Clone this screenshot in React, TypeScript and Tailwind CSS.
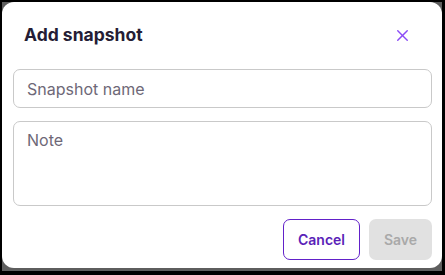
import { X } from 'lucide-react';

export default function App() {
  return (
    <div className="h-[275px] w-[445px] bg-black pt-[2px] pl-[2px] pr-[3px] pb-[4px]" style={{ fontFamily: 'Inter, "Noto Sans", sans-serif' }}>
      <div className="h-full bg-[#5e5e5e] pb-[3px]">
        <div className="flex h-full flex-col rounded-[12px] bg-white pl-[11px] pr-[10px] pb-[8px]">
          {/* Header */}
          <div className="flex items-center justify-between pt-[21px] pb-[22px] pl-[11px] pr-[20px]">
            <h2 className="text-[17.5px] leading-6 font-bold text-[#251d35]">Add snapshot</h2>
            <button className="text-[#8b4cf6]" title="Close">
              <X size={19} strokeWidth={1.8} />
            </button>
          </div>

          {/* Fields */}
          <input
            placeholder="Snapshot name"
            className="h-[39px] w-full rounded-[7px] border border-[#c9c9c9] px-[13px] text-[16px] text-[#251d35] placeholder:text-[#6e6877] outline-none"
          />
          <textarea
            placeholder="Note"
            className="mt-[13px] h-[85px] w-full resize-none rounded-[7px] border border-[#c9c9c9] px-[13px] py-[6px] text-[16px] text-[#251d35] placeholder:text-[#6e6877] outline-none"
          />

          {/* Actions */}
          <div className="mt-[13px] flex justify-end gap-[9px]">
            <button className="h-[41px] w-[77px] rounded-[7px] border border-[#6221c9] text-[14px] font-semibold text-[#5a1fb8]">
              Cancel
            </button>
            <button disabled className="h-[41px] w-[63px] rounded-[7px] bg-[#e1e1e1] text-[14px] font-semibold text-[#a9a9a9]">
              Save
            </button>
          </div>
        </div>
      </div>
    </div>
  );
}
